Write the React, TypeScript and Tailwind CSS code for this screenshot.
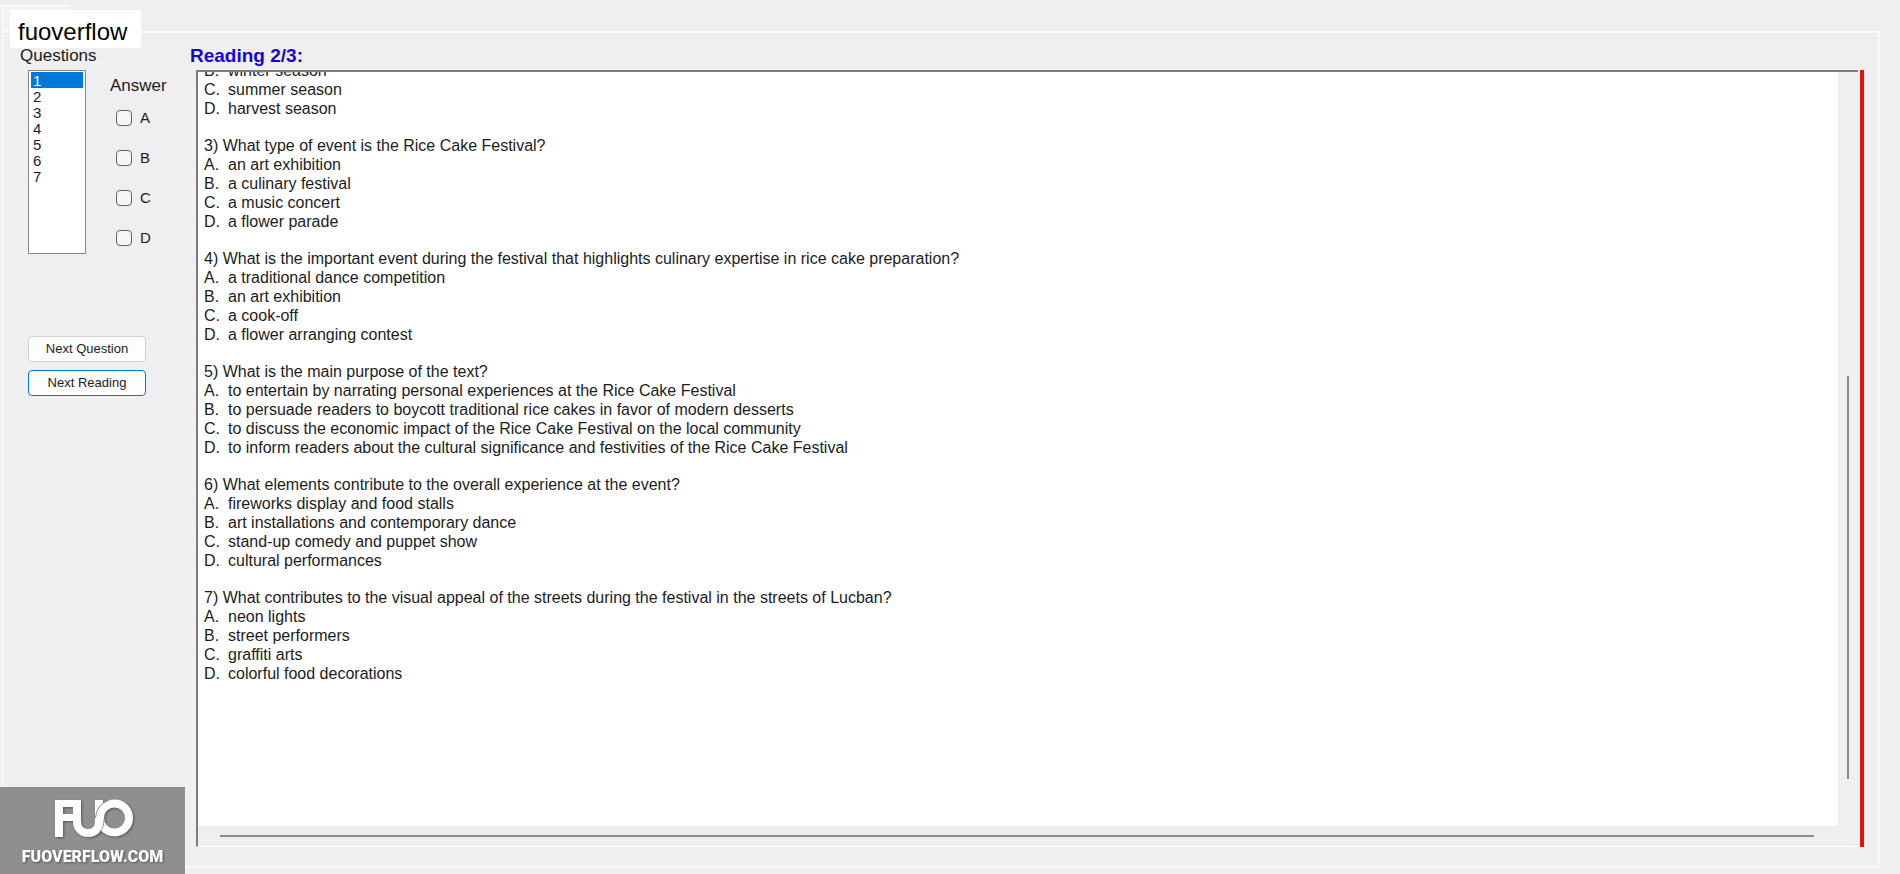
import { useState } from "react";

interface Question {
  id: number;
  text: string;
  options: string[];
}

const questions: Question[] = [
  { id: 3, text: "What type of event is the Rice Cake Festival?", options: ["an art exhibition", "a culinary festival", "a music concert", "a flower parade"] },
  { id: 4, text: "What is the important event during the festival that highlights culinary expertise in rice cake preparation?", options: ["a traditional dance competition", "an art exhibition", "a cook-off", "a flower arranging contest"] },
  {
    id: 5,
    text: "What is the main purpose of the text?",
    options: [
      "to entertain by narrating personal experiences at the Rice Cake Festival",
      "to persuade readers to boycott traditional rice cakes in favor of modern desserts",
      "to discuss the economic impact of the Rice Cake Festival on the local community",
      "to inform readers about the cultural significance and festivities of the Rice Cake Festival",
    ],
  },
  { id: 6, text: "What elements contribute to the overall experience at the event?", options: ["fireworks display and food stalls", "art installations and contemporary dance", "stand-up comedy and puppet show", "cultural performances"] },
  { id: 7, text: "What contributes to the visual appeal of the streets during the festival in the streets of Lucban?", options: ["neon lights", "street performers", "graffiti arts", "colorful food decorations"] },
];

const letters = ["A", "B", "C", "D"];

const Option = ({ letter, text }: { letter: string; text: string }) => (
  <li className="flex">
    <span className="w-6 shrink-0">{letter}.</span>
    <span>{text}</span>
  </li>
);

const Sidebar = () => {
  const [current, setCurrent] = useState("1");

  return (
    <aside className="w-[186px] shrink-0 pl-6">
      <div className="flex gap-6">
        <div className="w-[58px]">
          <label htmlFor="questions" className="-ml-2 block h-[26px] text-[17px] leading-6">
            Questions
          </label>
          <select
            id="questions"
            size={7}
            value={current}
            onChange={(e) => setCurrent(e.target.value)}
            className="block h-[184px] w-full overflow-hidden border border-[#828790] bg-white px-0.5 py-px text-[15px] outline-none"
          >
            {["1", "2", "3", "4", "5", "6", "7"].map((n) => (
              <option
                key={n}
                value={n}
                className="h-4 min-h-4 px-0.5 py-0 leading-4 checked:bg-[#0078d7] checked:bg-linear-to-r checked:from-[#0078d7] checked:to-[#0078d7] checked:text-white"
              >
                {n}
              </option>
            ))}
          </select>
        </div>

        <fieldset className="pt-[30px]">
          <legend className="float-left text-[17px] leading-6">Answer</legend>
          <div className="clear-both flex flex-col gap-4 pt-2 pl-1.5">
            {letters.map((letter) => (
              <label key={letter} className="flex h-6 items-center gap-2 text-[15px]">
                <input type="checkbox" name={letter} className="size-4 appearance-none rounded-[4px] border border-[#626262] bg-[#f6f6f6] checked:bg-[#0078d7]" />
                {letter}
              </label>
            ))}
          </div>
        </fieldset>
      </div>

      <div className="mt-[82px] flex w-[118px] flex-col gap-2">
        <button type="button" className="h-[26px] rounded-[4px] border border-[#d0d0d0] bg-[#fdfdfd] text-[13px]">
          Next Question
        </button>
        <button type="button" className="h-[26px] rounded-[4px] border border-[#0078d4] bg-[#fdfdfd] text-[13px]">
          Next Reading
        </button>
      </div>
    </aside>
  );
};

const ReadingPane = () => (
  <section className="flex min-h-0 min-w-0 flex-1 flex-col">
    <h1 className="h-[26px] shrink-0 text-[19px] leading-6 font-bold text-[#1405d6]">Reading 2/3:</h1>
    <div className="ml-1.5 flex min-h-0 flex-1">
      <div className="grid min-h-0 min-w-0 flex-1 grid-cols-[minmax(0,1fr)_20px] grid-rows-[minmax(0,1fr)_20px] border-t-2 border-b border-l-2 border-[#7d7d7d] border-b-white">
        {/* scrolled text, the first line is cut by the top edge */}
        <div className="flex min-h-0 flex-col justify-end overflow-hidden bg-white pb-[143px] pl-1.5 text-base leading-[19px] text-[#1c1c1c]">
          <ul>
            <Option letter="B" text="winter season" />
            <Option letter="C" text="summer season" />
            <Option letter="D" text="harvest season" />
          </ul>
          {questions.map((q) => (
            <div key={q.id} className="pt-[18px]">
              <p>
                {q.id}) {q.text}
              </p>
              <ul>
                {q.options.map((text, i) => (
                  <Option key={text} letter={letters[i]} text={text} />
                ))}
              </ul>
            </div>
          ))}
        </div>
        <div className="flex flex-col items-center pt-[304px] pb-[47px]">
          <div className="w-0.5 flex-1 bg-[#8a8a8a]" />
        </div>
        <div className="flex items-center pr-6 pl-[22px]">
          <div className="h-0.5 flex-1 bg-[#8a8a8a]" />
        </div>
      </div>
      <div className="ml-0.5 w-1 bg-[#e3120b]" />
    </div>
  </section>
);

const Logo = () => (
  <div className="absolute bottom-0 left-0 flex h-[87px] w-[185px] flex-col items-center bg-[#8f8f8f] pt-3 text-white">
    <svg width="80" height="38" viewBox="-2 0 80 38" fill="none" className="shrink-0 drop-shadow-[1px_1px_1px_rgba(0,0,0,0.4)]">
      <path d="M0 1H26V8H8V15H19V22H8V38H0Z" fill="currentColor" />
      <path d="M22 1V22C22 30 27 34 33 34C40 34 44 30 44 22V1" stroke="currentColor" strokeWidth="8" />
      <circle cx="59.500" cy="19" r="14.500" stroke="currentColor" strokeWidth="8" />
      <path d="M54 1.200A19 19 0 0 0 40.500 19" stroke="#8f8f8f" />
      <path d="M49 20C49 27 47 31 43 35" stroke="#8f8f8f" />
    </svg>
    <span className="shrink-0 font-[Roboto,'Liberation_Sans',sans-serif] text-base leading-10 font-black drop-shadow-[1px_1px_1px_rgba(0,0,0,0.4)]">FUOVERFLOW.COM</span>
  </div>
);

const App = () => {
  return (
    <div className="relative flex h-screen flex-col overflow-hidden bg-[#efefef] pt-[5px] pr-5 pb-1.5 pl-0.5 font-['Liberation_Sans',Arial,sans-serif] text-[#1c1c1c]">
      <div className="h-[26px] w-[68px] shrink-0 border-t border-l border-white bg-[#f3f3f3]" />
      <main className="flex min-h-0 flex-1 border-2 border-[#f8f8f8] pt-[11px] pr-[14px] pb-[19px]">
        <Sidebar />
        <ReadingPane />
      </main>
      <div className="absolute top-2.5 left-2.5 h-[38px] w-[131px] bg-white pl-2 text-2xl leading-[44px] text-black">
        fuoverflow
      </div>
      <Logo />
    </div>
  );
};

export default App;
